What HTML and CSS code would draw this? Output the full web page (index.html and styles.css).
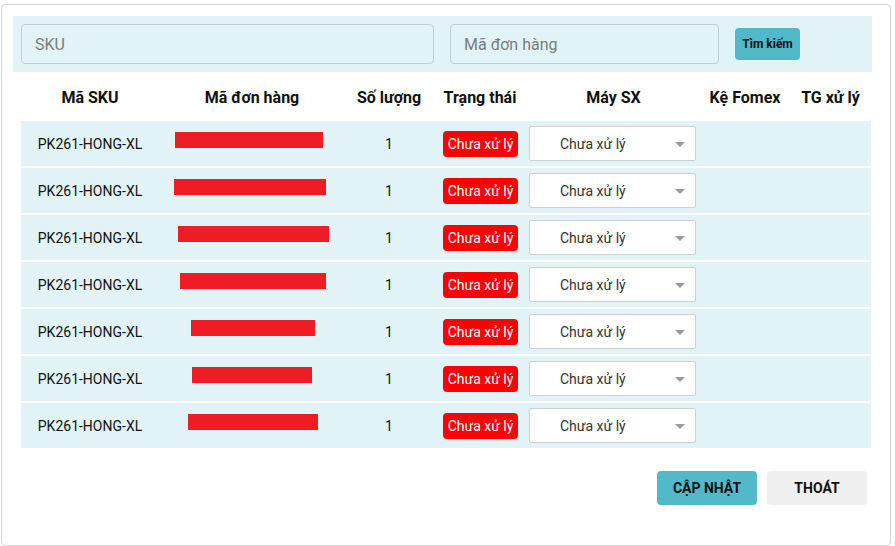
FILE: index.html
```html
<!DOCTYPE html>
<html lang="vi">
<head>
<meta charset="utf-8">
<link rel="stylesheet" href="styles.css">
</head>
<body>
<div class="card">
  <div class="search">
    <input class="inp inp-sku" placeholder="SKU">
    <input class="inp inp-order" placeholder="Mã đơn hàng">
    <button class="btn-search">Tìm kiếm</button>
  </div>
  <div class="table">
    <div class="row head">
      <div class="c">Mã SKU</div>
      <div class="c">Mã đơn hàng</div>
      <div class="c">Số lượng</div>
      <div class="c">Trạng thái</div>
      <div class="c">Máy SX</div>
      <div class="c">Kệ Fomex</div>
      <div class="c">TG xử lý</div>
    </div>
    <div class="row">
      <div class="c">PK261-HONG-XL</div>
      <div class="c"><span class="redact" style="width:148px;margin-left:-6px"></span></div>
      <div class="c">1</div>
      <div class="c"><span class="badge">Chưa xử lý</span></div>
      <div class="c"><div class="select">Chưa xử lý<span class="caret"></span></div></div>
      <div class="c"></div>
      <div class="c"></div>
    </div>
    <div class="row">
      <div class="c">PK261-HONG-XL</div>
      <div class="c"><span class="redact" style="width:152px;margin-left:-4px"></span></div>
      <div class="c">1</div>
      <div class="c"><span class="badge">Chưa xử lý</span></div>
      <div class="c"><div class="select">Chưa xử lý<span class="caret"></span></div></div>
      <div class="c"></div>
      <div class="c"></div>
    </div>
    <div class="row">
      <div class="c">PK261-HONG-XL</div>
      <div class="c"><span class="redact" style="width:151px;margin-left:2px"></span></div>
      <div class="c">1</div>
      <div class="c"><span class="badge">Chưa xử lý</span></div>
      <div class="c"><div class="select">Chưa xử lý<span class="caret"></span></div></div>
      <div class="c"></div>
      <div class="c"></div>
    </div>
    <div class="row">
      <div class="c">PK261-HONG-XL</div>
      <div class="c"><span class="redact" style="width:146px;margin-left:1px"></span></div>
      <div class="c">1</div>
      <div class="c"><span class="badge">Chưa xử lý</span></div>
      <div class="c"><div class="select">Chưa xử lý<span class="caret"></span></div></div>
      <div class="c"></div>
      <div class="c"></div>
    </div>
    <div class="row">
      <div class="c">PK261-HONG-XL</div>
      <div class="c"><span class="redact" style="width:124px;margin-left:2px"></span></div>
      <div class="c">1</div>
      <div class="c"><span class="badge">Chưa xử lý</span></div>
      <div class="c"><div class="select">Chưa xử lý<span class="caret"></span></div></div>
      <div class="c"></div>
      <div class="c"></div>
    </div>
    <div class="row">
      <div class="c">PK261-HONG-XL</div>
      <div class="c"><span class="redact" style="width:120px;margin-left:0px"></span></div>
      <div class="c">1</div>
      <div class="c"><span class="badge">Chưa xử lý</span></div>
      <div class="c"><div class="select">Chưa xử lý<span class="caret"></span></div></div>
      <div class="c"></div>
      <div class="c"></div>
    </div>
    <div class="row">
      <div class="c">PK261-HONG-XL</div>
      <div class="c"><span class="redact" style="width:130px;margin-left:2px"></span></div>
      <div class="c">1</div>
      <div class="c"><span class="badge">Chưa xử lý</span></div>
      <div class="c"><div class="select">Chưa xử lý<span class="caret"></span></div></div>
      <div class="c"></div>
      <div class="c"></div>
    </div>
  </div>
  <div class="footer">
    <button class="btn btn-update">CẬP NHẬT</button>
    <button class="btn btn-exit">THOÁT</button>
  </div>
</div>
</body>
</html>
```
FILE: styles.css
```css
* { box-sizing: border-box; }
html, body { margin: 0; padding: 0; background: #fff; }
body { font-family: Roboto, "Noto Sans", sans-serif; color: #111; }
.card {
  margin: 4px 0 0 1px;
  width: 890px;
  height: 542px;
  border: 1px solid #d2d2d2;
  border-radius: 4px;
  padding: 11px 18px 0 11px;
}
.search {
  background: #e1f3f6;
  height: 56px;
  padding: 8px;
  display: flex;
  align-items: center;
  gap: 16px;
}
.inp {
  height: 40px;
  border: 1px solid #bfcfd3;
  border-radius: 4px;
  background: transparent;
  font-family: Roboto, sans-serif;
  font-size: 16px;
  padding: 0 13px;
  outline: none;
}
.inp::placeholder { color: #7b7b7b; }
.inp-sku { width: 413px; }
.inp-order { width: 269px; }
.btn-search {
  width: 65px;
  height: 32px;
  border: none;
  border-radius: 4px;
  background: #51b8c8;
  font-family: Roboto, sans-serif;
  font-weight: 700;
  font-size: 12px;
  color: #111;
  padding: 0;
}
.table {
  margin: 0 0 0 8px;
  width: 850px;
  display: grid;
  row-gap: 2px;
}
.row {
  display: grid;
  grid-template-columns: 138px 186px 88px 94px 173px 90px 81px;
  height: 45px;
  background: #e1f3f6;
  font-size: 14px;
}
.row.head {
  background: #fff;
  height: 47px;
  padding-top: 4px;
  font-weight: 700;
  font-size: 16px;
}
.c {
  display: flex;
  align-items: center;
  justify-content: center;
  white-space: nowrap;
}
.redact {
  display: block;
  height: 16px;
  background: #ee1c25;
  margin-bottom: 7px;
}
.badge {
  display: inline-block;
  background: #ff0000;
  color: #fff;
  border-radius: 4px;
  padding: 4px 5px;
  line-height: 18px;
  margin-left: 1px;
}
.select {
  position: relative;
  width: 167px;
  height: 35px;
  background: #fff;
  border: 1px solid #cfcfcf;
  border-radius: 2px;
  padding-left: 30px;
  display: flex;
  align-items: center;
  color: #333;
  margin-left: -2px;
}
.caret {
  position: absolute;
  right: 10px;
  top: 15px;
  width: 0;
  height: 0;
  border-left: 5px solid transparent;
  border-right: 5px solid transparent;
  border-top: 5px solid #9a9a9a;
}
.footer {
  display: flex;
  justify-content: flex-end;
  gap: 10px;
  margin-top: 23px;
  padding-right: 5px;
}
.btn {
  width: 100px;
  height: 34px;
  border: none;
  border-radius: 4px;
  font-family: Roboto, sans-serif;
  font-weight: 700;
  font-size: 14px;
  color: #111;
  padding: 0;
}
.btn-update { background: #52b9c9; }
.btn-exit { background: #efefef; }
```
